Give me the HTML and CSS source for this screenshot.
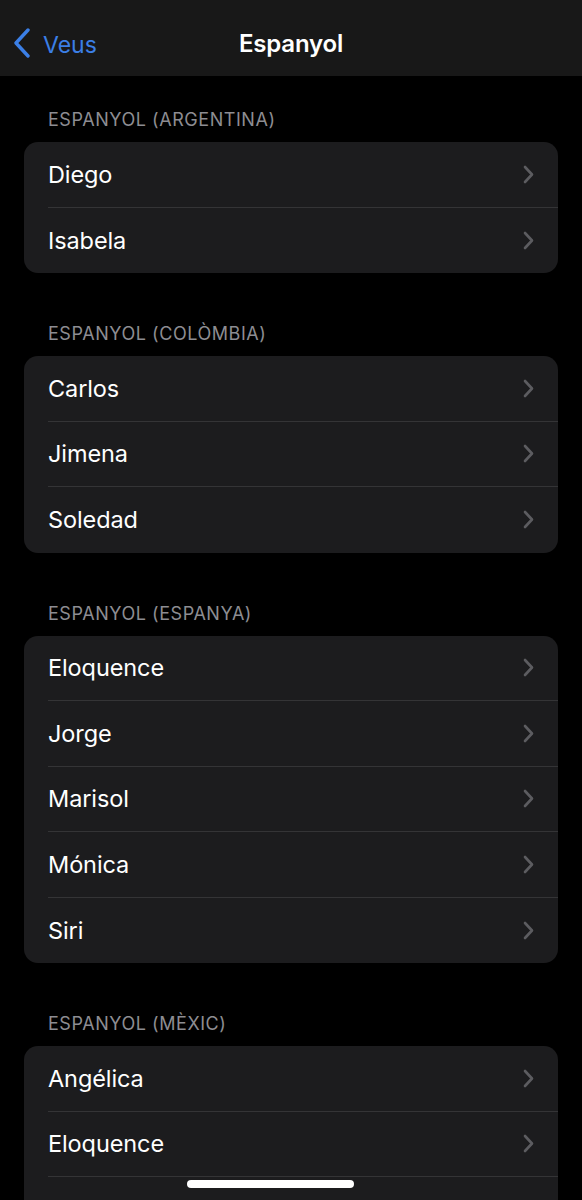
FILE: index.html
```html
<!DOCTYPE html>
<html lang="ca">
<head>
    <meta charset="UTF-8">
    <meta name="viewport" content="width=device-width, initial-scale=1.0">
    <title>Espanyol</title>
    <link rel="stylesheet" href="styles.css">
</head>
<body>
    <header class="nav">
        <a class="nav-back" href="#">
            <svg width="18" height="30" viewBox="0 0 18 30"><path d="M15 2 L3 15 L15 28" fill="none" stroke="#3b7fe6" stroke-width="3.4" stroke-linecap="round" stroke-linejoin="round"/></svg>
            <span>Veus</span>
        </a>
        <h1 class="nav-title">Espanyol</h1>
    </header>

    <main class="content">
        <section class="group">
            <h2 class="group-title">ESPANYOL (ARGENTINA)</h2>
            <ul class="card">
                <li class="row"><div class="row-inner"><span>Diego</span><svg class="chev" width="11" height="19" viewBox="0 0 11 19"><path d="M2 2 L9 9.5 L2 17" fill="none" stroke="#5c5c60" stroke-width="2.6" stroke-linecap="round" stroke-linejoin="round"/></svg></div></li>
                <li class="row"><div class="row-inner"><span>Isabela</span><svg class="chev" width="11" height="19" viewBox="0 0 11 19"><path d="M2 2 L9 9.5 L2 17" fill="none" stroke="#5c5c60" stroke-width="2.6" stroke-linecap="round" stroke-linejoin="round"/></svg></div></li>
            </ul>
        </section>

        <section class="group">
            <h2 class="group-title">ESPANYOL (COLÒMBIA)</h2>
            <ul class="card">
                <li class="row"><div class="row-inner"><span>Carlos</span><svg class="chev" width="11" height="19" viewBox="0 0 11 19"><path d="M2 2 L9 9.5 L2 17" fill="none" stroke="#5c5c60" stroke-width="2.6" stroke-linecap="round" stroke-linejoin="round"/></svg></div></li>
                <li class="row"><div class="row-inner"><span>Jimena</span><svg class="chev" width="11" height="19" viewBox="0 0 11 19"><path d="M2 2 L9 9.5 L2 17" fill="none" stroke="#5c5c60" stroke-width="2.6" stroke-linecap="round" stroke-linejoin="round"/></svg></div></li>
                <li class="row"><div class="row-inner"><span>Soledad</span><svg class="chev" width="11" height="19" viewBox="0 0 11 19"><path d="M2 2 L9 9.5 L2 17" fill="none" stroke="#5c5c60" stroke-width="2.6" stroke-linecap="round" stroke-linejoin="round"/></svg></div></li>
            </ul>
        </section>

        <section class="group">
            <h2 class="group-title">ESPANYOL (ESPANYA)</h2>
            <ul class="card">
                <li class="row"><div class="row-inner"><span>Eloquence</span><svg class="chev" width="11" height="19" viewBox="0 0 11 19"><path d="M2 2 L9 9.5 L2 17" fill="none" stroke="#5c5c60" stroke-width="2.6" stroke-linecap="round" stroke-linejoin="round"/></svg></div></li>
                <li class="row"><div class="row-inner"><span>Jorge</span><svg class="chev" width="11" height="19" viewBox="0 0 11 19"><path d="M2 2 L9 9.5 L2 17" fill="none" stroke="#5c5c60" stroke-width="2.6" stroke-linecap="round" stroke-linejoin="round"/></svg></div></li>
                <li class="row"><div class="row-inner"><span>Marisol</span><svg class="chev" width="11" height="19" viewBox="0 0 11 19"><path d="M2 2 L9 9.5 L2 17" fill="none" stroke="#5c5c60" stroke-width="2.6" stroke-linecap="round" stroke-linejoin="round"/></svg></div></li>
                <li class="row"><div class="row-inner"><span>Mónica</span><svg class="chev" width="11" height="19" viewBox="0 0 11 19"><path d="M2 2 L9 9.5 L2 17" fill="none" stroke="#5c5c60" stroke-width="2.6" stroke-linecap="round" stroke-linejoin="round"/></svg></div></li>
                <li class="row"><div class="row-inner"><span>Siri</span><svg class="chev" width="11" height="19" viewBox="0 0 11 19"><path d="M2 2 L9 9.5 L2 17" fill="none" stroke="#5c5c60" stroke-width="2.6" stroke-linecap="round" stroke-linejoin="round"/></svg></div></li>
            </ul>
        </section>

        <section class="group">
            <h2 class="group-title">ESPANYOL (MÈXIC)</h2>
            <ul class="card">
                <li class="row"><div class="row-inner"><span>Angélica</span><svg class="chev" width="11" height="19" viewBox="0 0 11 19"><path d="M2 2 L9 9.5 L2 17" fill="none" stroke="#5c5c60" stroke-width="2.6" stroke-linecap="round" stroke-linejoin="round"/></svg></div></li>
                <li class="row"><div class="row-inner"><span>Eloquence</span><svg class="chev" width="11" height="19" viewBox="0 0 11 19"><path d="M2 2 L9 9.5 L2 17" fill="none" stroke="#5c5c60" stroke-width="2.6" stroke-linecap="round" stroke-linejoin="round"/></svg></div></li>
                <li class="row"><div class="row-inner"></div></li>
            </ul>
        </section>
    </main>

    <div class="home-bar"></div>
</body>
</html>
```

FILE: styles.css
```css
body {
    margin: 0;
    background-color: #000;
    color: #fff;
    font-family: Inter, "Noto Sans", sans-serif;
    height: 1200px;
    overflow: hidden;
}

.nav {
    height: 76px;
    box-sizing: border-box;
    padding-top: 10px;
    background-color: #181818;
    display: flex;
    align-items: center;
    justify-content: center;
    position: relative;
}

.nav-back {
    position: absolute;
    left: 13px;
    top: 27px;
    display: flex;
    align-items: center;
    gap: 12px;
    color: #3b7fe6;
    text-decoration: none;
    font-size: 23px;
}

.nav-back span {
    margin-top: 4px;
}

.nav-title {
    margin: 0;
    font-size: 24px;
    font-weight: 600;
    letter-spacing: -0.2px;
}

.content {
    padding: 33px 24px 0;
}

.group {
    margin-bottom: 50px;
}

.group-title {
    margin: 0 0 11px 24px;
    font-size: 18px;
    line-height: 22px;
    font-weight: 400;
    color: #8d8d92;
    letter-spacing: 0.55px;
}

.card {
    list-style: none;
    margin: 0;
    padding: 0;
    background-color: #1c1c1e;
    border-radius: 14px;
    overflow: hidden;
}

.row {
    padding-left: 24px;
    height: 65.5px;
}

.row-inner {
    height: 100%;
    box-sizing: border-box;
    display: flex;
    align-items: center;
    justify-content: space-between;
    padding-right: 24px;
    border-bottom: 1px solid #343436;
    font-size: 23.5px;
    letter-spacing: -0.1px;
}

.row:last-child .row-inner {
    border-bottom: none;
}

.home-bar {
    position: fixed;
    left: 187px;
    top: 1180px;
    width: 167px;
    height: 8px;
    border-radius: 4px;
    background-color: #fff;
}
```
